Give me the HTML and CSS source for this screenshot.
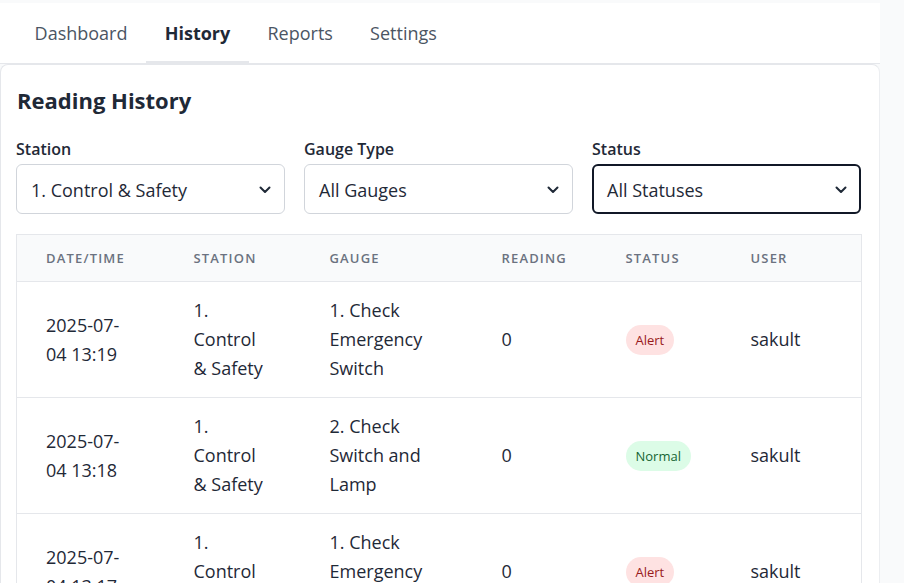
FILE: index.html
```html
<!DOCTYPE html>
<html>
<head>
<meta charset="utf-8">
<link rel="stylesheet" href="styles.css">
</head>
<body>
<div class="page">
  <nav class="tabs">
    <a class="tab">Dashboard</a>
    <a class="tab active">History</a>
    <a class="tab">Reports</a>
    <a class="tab">Settings</a>
  </nav>
  <section class="card">
    <h1 class="title">Reading History</h1>
    <div class="filters">
      <div class="field">
        <div class="label">Station</div>
        <div class="select"><span>1. Control &amp; Safety</span><svg class="chev" width="12" height="8" viewBox="0 0 12 8"><path d="M1.5 1.5 L6 6 L10.5 1.5" fill="none" stroke="#1f2937" stroke-width="2" stroke-linecap="round" stroke-linejoin="round"/></svg></div>
      </div>
      <div class="field">
        <div class="label">Gauge Type</div>
        <div class="select"><span>All Gauges</span><svg class="chev" width="12" height="8" viewBox="0 0 12 8"><path d="M1.5 1.5 L6 6 L10.5 1.5" fill="none" stroke="#1f2937" stroke-width="2" stroke-linecap="round" stroke-linejoin="round"/></svg></div>
      </div>
      <div class="field">
        <div class="label">Status</div>
        <div class="select focus"><span>All Statuses</span><svg class="chev" width="12" height="8" viewBox="0 0 12 8"><path d="M1.5 1.5 L6 6 L10.5 1.5" fill="none" stroke="#1f2937" stroke-width="2" stroke-linecap="round" stroke-linejoin="round"/></svg></div>
      </div>
    </div>
    <table class="table">
      <colgroup>
        <col class="c1"><col class="c2"><col class="c3"><col class="c4"><col class="c5"><col class="c6">
      </colgroup>
      <thead>
        <tr><th>Date/Time</th><th>Station</th><th>Gauge</th><th>Reading</th><th>Status</th><th>User</th></tr>
      </thead>
      <tbody>
        <tr><td>2025-07-04 13:19</td><td>1. Control &amp; Safety</td><td>1. Check Emergency Switch</td><td>0</td><td><span class="badge alert">Alert</span></td><td>sakult</td></tr>
        <tr><td>2025-07-04 13:18</td><td>1. Control &amp; Safety</td><td>2. Check Switch and Lamp</td><td>0</td><td><span class="badge normal">Normal</span></td><td>sakult</td></tr>
        <tr><td>2025-07-04 13:17</td><td>1. Control &amp; Safety</td><td>1. Check Emergency Switch</td><td>0</td><td><span class="badge alert">Alert</span></td><td>sakult</td></tr>
      </tbody>
    </table>
  </section>
</div>
</body>
</html>
```
FILE: styles.css
```css
html, body {
  margin: 0;
  padding: 0;
  background: #f9fafb;
  font-family: "Open Sans", "Noto Sans", sans-serif;
  color: #1f2937;
  overflow: hidden;
}
.page {
  width: 880px;
  padding-top: 3px;
}
.tabs {
  display: flex;
  background: #ffffff;
  height: 60px;
  padding-left: 16px;
  border-bottom: 1px solid #e5e7eb;
  box-sizing: content-box;
}
.tab {
  display: flex;
  align-items: center;
  padding: 1px 18.6px 0;
  font-size: 18px;
  color: #4b5563;
  border-bottom: 3px solid transparent;
  margin-bottom: -1px;
}
.tab.active {
  font-weight: 700;
  color: #1f2937;
  border-bottom-color: #e5e7eb;
}
.card {
  background: #ffffff;
  border: 1px solid #e5e7eb;
  border-right-color: #eceef1;
  border-radius: 8px;
  padding: 19px 18px 0 15px;
  height: 600px;
  box-sizing: border-box;
}
.title {
  margin: 0 0 21px 1px;
  font-size: 22px;
  line-height: 32px;
  font-weight: 700;
  color: #1f2937;
}
.filters {
  display: grid;
  grid-template-columns: 269px 269px 269px;
  column-gap: 19px;
  margin-bottom: 20px;
}
.label {
  font-size: 16px;
  line-height: 24px;
  font-weight: 600;
  color: #1f2937;
  margin-bottom: 3px;
}
.select {
  height: 50px;
  box-sizing: border-box;
  border: 1px solid #d1d5db;
  border-radius: 6px;
  display: flex;
  align-items: center;
  justify-content: space-between;
  padding: 1px 13px 0 14px;
  font-size: 18px;
  color: #1f2937;
}
.select.focus {
  border: 2px solid #111827;
  padding: 1px 12px 0 13px;
}
.chev {
  display: block;
}
.table {
  width: 845px;
  border-collapse: collapse;
  table-layout: fixed;
  border: 1px solid #e5e7eb;
}
.c1 { width: 148px; }
.c2 { width: 136px; }
.c3 { width: 172px; }
.c4 { width: 124px; }
.c5 { width: 125px; }
.c6 { width: 140px; }
th {
  background: #f9fafb;
  text-align: left;
  font-size: 13px;
  font-weight: 600;
  letter-spacing: 0.09em;
  text-transform: uppercase;
  color: #6b7280;
  padding: 14px 29px 14px 29px;
  line-height: 18px;
}
td {
  font-size: 18px;
  line-height: 29px;
  padding: 14px 29px 14px 29px;
  vertical-align: middle;
  border-top: 1px solid #e5e7eb;
  color: #1f2937;
}
.badge {
  display: inline-block;
  font-size: 13px;
  line-height: 30px;
  padding: 0 10px;
  border-radius: 15px;
}
.badge.alert {
  background: #fee2e2;
  color: #991b1b;
}
.badge.normal {
  background: #dcfce7;
  color: #166534;
}
```
